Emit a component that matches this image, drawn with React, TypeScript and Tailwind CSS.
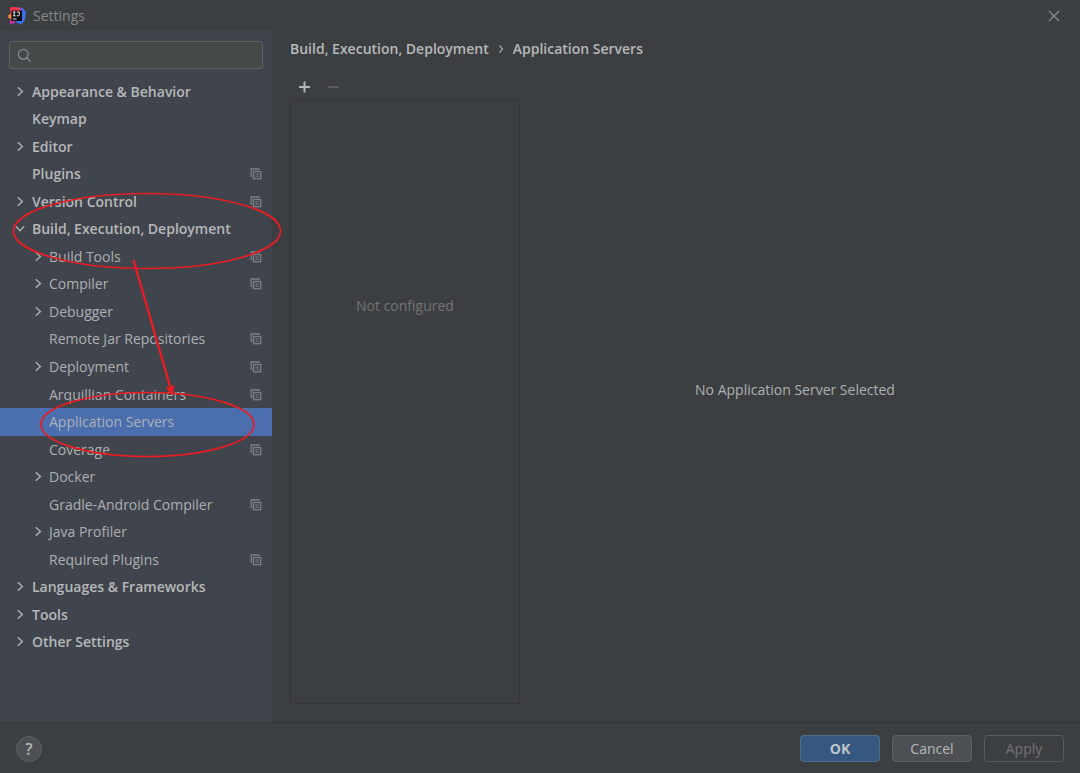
import React from "react";

type Item = {
  label: string;
  level: 0 | 1;
  arrow?: "right" | "down";
  project?: boolean;
  selected?: boolean;
};

const items: Item[] = [
  { label: "Appearance & Behavior", level: 0, arrow: "right" },
  { label: "Keymap", level: 0 },
  { label: "Editor", level: 0, arrow: "right" },
  { label: "Plugins", level: 0, project: true },
  { label: "Version Control", level: 0, arrow: "right", project: true },
  { label: "Build, Execution, Deployment", level: 0, arrow: "down" },
  { label: "Build Tools", level: 1, arrow: "right", project: true },
  { label: "Compiler", level: 1, arrow: "right", project: true },
  { label: "Debugger", level: 1, arrow: "right" },
  { label: "Remote Jar Repositories", level: 1, project: true },
  { label: "Deployment", level: 1, arrow: "right", project: true },
  { label: "Arquillian Containers", level: 1, project: true },
  { label: "Application Servers", level: 1, selected: true },
  { label: "Coverage", level: 1, project: true },
  { label: "Docker", level: 1, arrow: "right" },
  { label: "Gradle-Android Compiler", level: 1, project: true },
  { label: "Java Profiler", level: 1, arrow: "right" },
  { label: "Required Plugins", level: 1, project: true },
  { label: "Languages & Frameworks", level: 0, arrow: "right" },
  { label: "Tools", level: 0, arrow: "right" },
  { label: "Other Settings", level: 0, arrow: "right" },
];

function Logo() {
  return (
    <svg width="18" height="18" viewBox="0 0 18 18" aria-hidden="true">
      <defs>
        <linearGradient id="warm" x1="0" y1="0" x2="0.3" y2="1">
          <stop offset="0" stopColor="#fe2d5b" />
          <stop offset="0.5" stopColor="#f9443f" />
          <stop offset="1" stopColor="#a52bd0" />
        </linearGradient>
        <linearGradient id="cool" x1="0" y1="0" x2="0.4" y2="1">
          <stop offset="0" stopColor="#8d4be0" />
          <stop offset="0.5" stopColor="#3b6ff0" />
          <stop offset="1" stopColor="#3470e8" />
        </linearGradient>
      </defs>
      <path d="M11 0.5 14.5 1 17.8 4.500 17 13 13.500 17.300 8 15.500Z" fill="url(#cool)" />
      <path d="M2 1 4 0 11 0.500 13 4 8 10 7 16 3 17.300 1.500 16 3 11Z" fill="url(#warm)" />
      <path d="M2.500 6.500 0.200 8.500 0.500 11 4 12.500Z" fill="#f98b24" />
      <rect x="3.500" y="3.500" width="10.500" height="10.500" fill="#0b0b10" />
      <path d="M4.800 5h2.800M6.200 5v3.800M4.800 8.800h2.800M8.800 5h2.600v2.600q0 1.200-1.200 1.200h-1.400M5 12h3.600" stroke="#f2f2f2" strokeWidth="1" fill="none" />
    </svg>
  );
}

function Arrow({ dir }: { dir?: "right" | "down" }) {
  return (
    <svg className="shrink-0" width="12" height="12" viewBox="0 0 12 12" fill="none" stroke="#adb0b3" strokeWidth="1.4" aria-hidden="true">
      {dir === "right" && <path d="M3.8 1.3 8.4 5.5 3.8 9.7" />}
      {dir === "down" && <path d="M1.8 3.3 6 7.7 10.2 3.3" />}
    </svg>
  );
}

function ProjectIcon() {
  return (
    <svg className="ml-auto shrink-0" width="12" height="12" viewBox="0 0 12 12" fill="none" stroke="#7a8188" aria-hidden="true">
      <path d="M1.200 8.700V1h7.700v1M1.200 8.200h1.300" strokeWidth="1.300" />
      <rect x="3.500" y="3.500" width="7.200" height="7.200" strokeWidth="1.300" />
      <path d="M5.300 6h3.600M5.300 8.200h3.600" />
    </svg>
  );
}

function Annotations() {
  return (
    <svg className="pointer-events-none absolute top-0 left-0" width="300" height="480" viewBox="0 0 300 480" fill="none" stroke="#e81c23" aria-hidden="true">
      <ellipse cx="147" cy="231" rx="133.5" ry="37.5" strokeWidth="1.7" />
      <ellipse cx="147.500" cy="424.500" rx="106.500" ry="32" strokeWidth="1.7" />
      <path d="M133.500 260 170.500 388" strokeWidth="2.4" />
      <path d="M165.500 388 174.500 385 173 395.500Z" fill="#e81c23" stroke="none" />
    </svg>
  );
}

export default function App() {
  return (
    <div className="relative flex min-h-screen flex-col bg-[#3c3f41] font-['Open_Sans','Noto_Sans',sans-serif] text-[14px] leading-5 text-[#b6b8ba]">
      <header className="flex h-[31px] items-center pr-4 pl-2">
        <Logo />
        <h1 className="ml-[7px] pt-px text-[#858789]">Settings</h1>
        <button aria-label="Close" className="ml-auto p-1">
          <svg width="12" height="12" viewBox="0 0 12 12" stroke="#8b8e90" strokeWidth="1.2" fill="none">
            <path d="M1 1 11 11M11 1 1 11" />
          </svg>
        </button>
      </header>

      <div className="flex grow">
        <aside className="w-[272px] shrink-0 bg-[#40444c] pt-[10px]">
          <div className="mx-[9px] flex h-7 items-center rounded-[3px] border border-[#5d6163] bg-[#454948] px-[7px]">
            <svg className="shrink-0" width="15" height="15" viewBox="0 0 15 15" stroke="#7d8f99" strokeWidth="1.2" fill="none" aria-hidden="true">
              <circle cx="6.300" cy="6.300" r="4.900" />
              <path d="M9.800 9.800 13.800 13.800" />
            </svg>
            <input aria-label="Search settings" className="ml-2 min-w-0 grow bg-transparent outline-none" />
          </div>
          <ul className="mt-[9px] grid min-h-[578px] auto-rows-fr">
            {items.map((item) => (
              <li key={item.label} className={item.selected ? "bg-[#4b6eaf]" : ""}>
                <a
                  href="#"
                  className={
                    "flex h-full items-center pr-[10px] " +
                    (item.level === 0 ? "gap-[6px] pl-[14px] font-semibold" : "gap-[5px] pl-8 text-[#adb0b3]")
                  }
                >
                  <Arrow dir={item.arrow} />
                  <span>{item.label}</span>
                  {item.project && <ProjectIcon />}
                </a>
              </li>
            ))}
          </ul>
        </aside>

        <main className="flex grow flex-col pt-2 pr-[10px] pb-[18px] pl-[18px]">
          <nav aria-label="Breadcrumb" className="flex items-center font-semibold">
            <a href="#">Build, Execution, Deployment</a>
            <svg className="mx-2" width="8" height="10" viewBox="0 0 8 10" fill="none" stroke="#a4a7a9" strokeWidth="1.2" aria-hidden="true">
              <path d="M2.500 1.500 5.500 5 2.500 8.500" />
            </svg>
            <span>Application Servers</span>
          </nav>
          <div className="mt-4 flex grow">
            <section className="flex w-[230px] shrink-0 flex-col">
              <div className="mb-px flex h-6 items-center gap-[13px] pl-[6px]">
                <button aria-label="Add">
                  <svg width="16" height="16" viewBox="0 0 16 16" stroke="#b4b7b9" strokeWidth="2" fill="none">
                    <path d="M8.500 2.500v11M3 8h11" />
                  </svg>
                </button>
                <button aria-label="Remove" disabled>
                  <svg width="16" height="16" viewBox="0 0 16 16" stroke="#5c5c5c" strokeWidth="2" fill="none">
                    <path d="M3 8h11" />
                  </svg>
                </button>
              </div>
              <div className="grow border border-[#343638] pt-[195px] text-center text-[#727476]">
                Not configured
              </div>
            </section>
            <section className="flex grow items-center justify-center">
              <p className="text-[#adb0b3]">No Application Server Selected</p>
            </section>
          </div>
        </main>
      </div>

      <footer className="flex h-[51px] items-center gap-3 border-t border-[#323435] px-4 pt-px">
        <button aria-label="Help" className="mr-auto flex size-[26px] items-center justify-center rounded-full border border-[#5e6163] bg-[#4c5052] text-[16px] font-semibold">
          ?
        </button>
        <button className="h-[27px] w-20 rounded-[4px] border border-[#4c708c] bg-[#365880] font-bold text-[#bec5cd]">OK</button>
        <button className="h-[27px] w-20 rounded-[4px] border border-[#5e6060] bg-[#4c5052]">Cancel</button>
        <button disabled className="h-[27px] w-20 rounded-[4px] border border-[#595c5d] text-[#727476]">Apply</button>
      </footer>

      <Annotations />
    </div>
  );
}
